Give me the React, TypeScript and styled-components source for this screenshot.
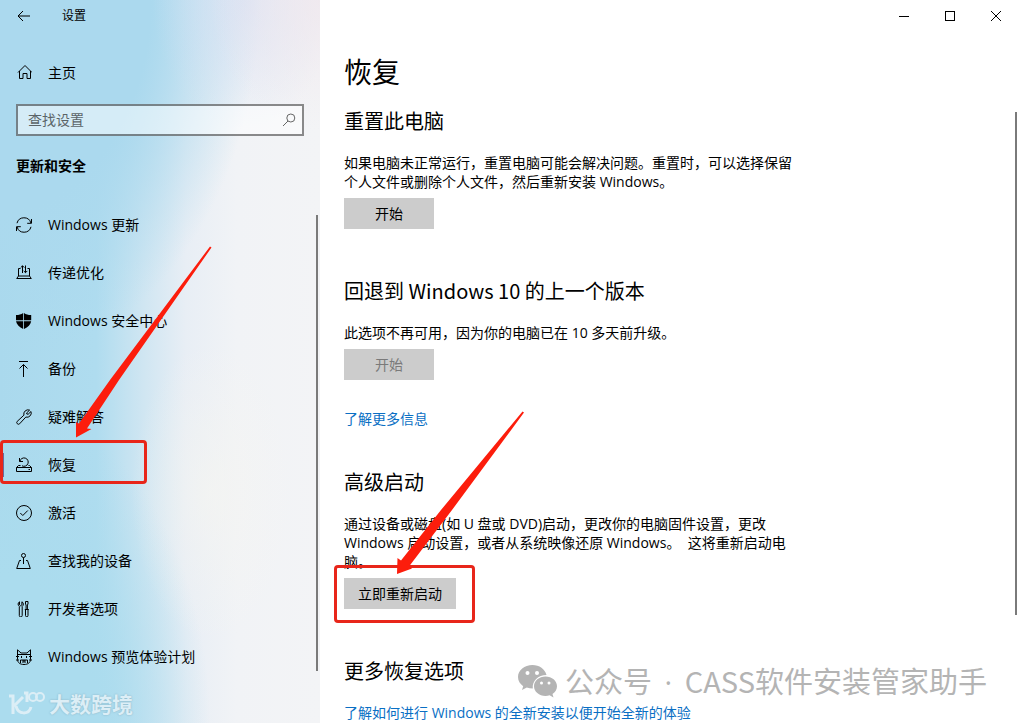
import React from "react";
import styled, { createGlobalStyle, css } from "styled-components";

const GlobalStyle = createGlobalStyle`
  *, *::before, *::after { box-sizing: border-box; }
  html, body { margin: 0; padding: 0; }
  body, button, input {
    font-family: "Open Sans", "Noto Sans CJK SC", sans-serif;
    font-size: 14px;
    color: #000;
  }
  h1, h2, p, ul { margin: 0; padding: 0; font-weight: 400; }
`;

const Shell = styled.div`
  display: flex;
  height: 100vh;
  overflow: hidden;
  background: #fff;
  position: relative;
`;

const Sidebar = styled.aside`
  position: relative;
  flex: 0 0 320px;
  display: flex;
  flex-direction: column;
  background:
    radial-gradient(ellipse 110px 130px at 100% 0, rgba(240, 230, 236, 0.7), rgba(240, 230, 236, 0) 100%),
    radial-gradient(ellipse 90px 130px at 76% 0, rgba(212, 222, 243, 0.7), rgba(212, 222, 243, 0) 100%),
    radial-gradient(ellipse 260px 360px at 0 0, #abd9ee 58%, rgba(171, 217, 238, 0) 100%),
    radial-gradient(ellipse 80px 150px at 66% 68%, rgba(246, 245, 240, 0.6), rgba(246, 245, 240, 0) 100%),
    radial-gradient(ellipse 210px 320px at 0 100%, #abdcee 45%, rgba(171, 220, 238, 0) 100%),
    linear-gradient(90deg, #aad9ed 0, #afdcef 30%, #d0e6f2 45%, #e8eef5 58%, #f1f3f6 74%, #f3f4f6 100%);
`;

const TopBar = styled.header`
  display: flex;
  align-items: center;
  height: 32px;
`;

const BackButton = styled.button`
  display: flex;
  align-items: center;
  justify-content: center;
  width: 48px;
  height: 32px;
  padding: 0;
  border: 0;
  background: none;
`;

const WindowTitle = styled.span`
  margin-left: 14px;
  font-size: 12px;
  line-height: 16px;
`;

const HomeLink = styled.a`
  display: flex;
  align-items: center;
  gap: 16px;
  height: 48px;
  margin-top: 16px;
  padding-left: 16px;
  color: #000;
  text-decoration: none;
`;

const SearchBox = styled.label`
  display: flex;
  align-items: center;
  height: 32px;
  margin: 8px 16px 0;
  padding: 0 6px 0 10px;
  border: 2px solid rgba(0, 0, 0, 0.45);
  background: rgba(255, 255, 255, 0.5);
`;

const SearchInput = styled.input`
  flex: 1;
  min-width: 0;
  padding: 0 0 2px;
  border: 0;
  outline: 0;
  background: none;
  &::placeholder { color: #5b6468; opacity: 1; }
`;

const Category = styled.h2`
  margin: 20px 16px 25px;
  font-size: 14px;
  font-weight: 700;
  line-height: 20px;
`;

const NavList = styled.ul`
  list-style: none;
`;

const NavItem = styled.li`
  position: relative;
`;

const NavLink = styled.a<{ $active?: boolean }>`
  display: flex;
  align-items: center;
  gap: 16px;
  height: 48px;
  padding-left: 16px;
  color: #000;
  line-height: 20px;
  text-decoration: none;
  ${(p) =>
    p.$active &&
    css`
      &::before {
        content: "";
        position: absolute;
        left: 0;
        top: 12px;
        width: 4px;
        height: 24px;
        background: #6a6a9c;
      }
    `}
`;

const Glyph = styled.svg`
  flex: none;
  fill: none;
  stroke: currentColor;
  stroke-width: 1;
`;

const ScrollThumb = styled.div<{ $top: number; $bottom: number }>`
  position: absolute;
  right: 2px;
  top: ${(p) => p.$top}px;
  bottom: ${(p) => p.$bottom}px;
  width: 2px;
  background: #7a7a7a;
`;

const Main = styled.main`
  position: relative;
  flex: 1;
  min-width: 0;
  display: flex;
  flex-direction: column;
`;

const Caption = styled.div`
  display: flex;
  justify-content: flex-end;
  flex: none;
  height: 32px;
`;

const CaptionButton = styled.button`
  display: flex;
  align-items: center;
  justify-content: center;
  width: 46px;
  padding: 0;
  border: 0;
  background: none;
`;

const Content = styled.div`
  flex: 1;
  min-height: 0;
  overflow-y: auto;
  scrollbar-width: none;
  padding: 20px 24px 0;
`;

const PageTitle = styled.h1`
  font-size: 28px;
  line-height: 40px;
  margin-bottom: 15px;
`;

const Section = styled.section`
  display: flex;
  flex-direction: column;
  align-items: flex-start;
  max-width: 450px;
  margin-bottom: 48px;

  &:last-child { margin-bottom: 0; }
`;

const SectionTitle = styled.h2`
  font-family: "Noto Sans CJK SC", sans-serif;
  font-size: 20px;
  line-height: 27px;
  margin-bottom: 19px;
`;

const Text = styled.p`
  line-height: 19px;
  margin-bottom: 7px;
`;

const ActionWrap = styled.div`
  position: relative;
`;

const ActionButton = styled.button`
  min-width: 90px;
  height: 31px;
  padding: 0 14px;
  border: 0;
  background: #ccc;
  line-height: 20px;
  &:disabled { color: #7a7a7a; }
`;

const TextLink = styled.a<{ $spaced?: boolean }>`
  margin-top: ${(p) => (p.$spaced ? 29 : 0)}px;
  margin-bottom: ${(p) => (p.$spaced ? -8 : 0)}px;
  line-height: 19px;
  color: #0a6fc4;
  text-decoration: none;
  white-space: nowrap;
`;

const Highlight = styled.div<{ $x: number; $y: number; $w: number; $h: number }>`
  position: absolute;
  left: ${(p) => p.$x}px;
  top: ${(p) => p.$y}px;
  width: ${(p) => p.$w}px;
  height: ${(p) => p.$h}px;
  border: 3px solid #e8261a;
  border-radius: 4px;
  pointer-events: none;
`;

const Arrow = styled.svg<{ $x: number; $y: number }>`
  position: absolute;
  left: ${(p) => p.$x}px;
  top: ${(p) => p.$y}px;
  z-index: 2;
  fill: #fc1d0c;
  pointer-events: none;
`;

const ChannelMark = styled.div`
  position: absolute;
  right: 32px;
  bottom: 19px;
  display: flex;
  align-items: center;
  gap: 8px;
  font-family: "Noto Sans CJK SC", sans-serif;
  font-size: 29px;
  line-height: 44px;
  color: #b4b4b4;
  white-space: nowrap;
`;

const Dot = styled.span`
  margin: 0 5px;
  font-family: "Open Sans", sans-serif;
`;

const SiteMark = styled.div`
  position: absolute;
  left: 8px;
  bottom: 6px;
  display: flex;
  align-items: center;
  gap: 3px;
  font-family: "Noto Sans CJK SC", sans-serif;
  font-size: 21px;
  font-weight: 700;
  line-height: 28px;
  color: #dceef6;
  text-shadow: 0 0 2px #86afc0;
`;

const NAV: { label: string; icon: React.ReactNode; active?: boolean }[] = [
  {
    label: "Windows 更新",
    icon: (
      <>
        <path d="M1 6.200A7.200 7.200 0 0 1 14.900 6M15 9.800A7.200 7.200 0 0 1 1.100 10" />
        <path d="M15.500 2v4.300h-4.300M.5 14V9.700h4.300" />
      </>
    ),
  },
  {
    label: "传递优化",
    icon: (
      <>
        <path d="M4.500 3.500h-2v7.500L.7 13.500h14.600L13.500 11V3.500h-2M2.500 11h11" />
        <path d="M6.500 8V.8M4.700 2.600L6.500.8l1.800 1.800M9.500.5v7.200M7.700 5.900l1.800 1.800 1.800-1.800" />
      </>
    ),
  },
  {
    label: "Windows 安全中心",
    icon: (
      <path
        fill="currentColor"
        stroke="none"
        d="M7.200 0v7.300H0V2C3 2 5 1.500 7.200 0zM8 0C10 1.500 12 2 15.200 2v5.300H8zM0 8.200h7.200V16C3.500 14 .6 11.500 0 8.200zM8 8.200h7.200C14.700 11.500 12 14 8 16z"
      />
    ),
  },
  { label: "备份", icon: <path d="M3 .5h9M7.500 16V3.500M3.500 7.500l4-4 4 4" /> },
  {
    label: "疑难解答",
    icon: (
      <path d="M13.600 1.100A4.300 4.300 0 0 0 7.900 6.200L1.200 12.400a1.700 1.700 0 0 0 2.400 2.400L9.800 8.100A4.300 4.300 0 0 0 15 2.500L12.200 5.200 10.800 5 10.700 3.900z" />
    ),
  },
  {
    label: "恢复",
    active: true,
    icon: (
      <>
        <path d="M4.500 8.500L2.500 8.500.5 10.500v4h15v-4l-2-2h-1M.5 10.500h15M12.500 12.500h1.500" />
        <path d="M3.500 1v3.500h3.500M3.900 4.300A4.200 4.200 0 1 1 6 8.800" />
      </>
    ),
  },
  {
    label: "激活",
    icon: (
      <>
        <circle cx="8" cy="8" r="7.500" />
        <path d="M4.300 8l2.500 2.500 5-5" />
      </>
    ),
  },
  {
    label: "查找我的设备",
    icon: (
      <>
        <circle cx="7.500" cy="2.500" r="2" />
        <path d="M7.500 4.500V11M5 7.500H3.500L.7 15.500h13.600L11.500 7.500H10" />
      </>
    ),
  },
  {
    label: "开发者选项",
    icon: (
      <>
        <path d="M3.500 .8v3l1.200 1 1.200-1v-3A2.600 2.600 0 0 1 6.200 5.300v9.200a1.400 1.400 0 0 1-2.900 0V5.300A2.600 2.600 0 0 1 3.500.8z" />
        <path d="M9.500 .5h2.500v2.500l-.6 1v4.500h-1.300V4l-.6-1zM8.800 8.500h4M9.500 8.500v6a1.200 1.200 0 0 0 2.500 0v-6" />
      </>
    ),
  },
  {
    label: "Windows 预览体验计划",
    icon: (
      <>
        <path d="M1.500 .8v9.700c0 3 2.500 5 6.500 5s6.500-2 6.500-5V.8L11 4H5zM0 7.500h3M13 7.500h3M0 11h3M13 11h3M2 5.500h12" />
        <path d="M5.500 7v2M10.500 7v2M4.500 14v-3h7v3M6 13h4M7 11v1h2v-1" />
      </>
    ),
  },
];

export default function App() {
  return (
    <Shell>
      <GlobalStyle />
      <Sidebar>
        <TopBar>
          <BackButton aria-label="返回">
            <Glyph width="14" height="12" viewBox="0 0 14 12">
              <path d="M1 6h12M6 1L1 6l5 5" />
            </Glyph>
          </BackButton>
          <WindowTitle>设置</WindowTitle>
        </TopBar>
        <HomeLink href="#home">
          <Glyph width="16" height="16" viewBox="0 0 16 16">
            <path d="M2 8.500l7-7 7 7M3.500 7v7.500h3.500V9.500h4v5h3.500V7" />
          </Glyph>
          主页
        </HomeLink>
        <SearchBox>
          <SearchInput type="text" placeholder="查找设置" aria-label="查找设置" />
          <Glyph width="14" height="14" viewBox="0 0 14 14" color="#666">
            <circle cx="8.800" cy="5" r="4" />
            <path d="M6 8l-5 5" />
          </Glyph>
        </SearchBox>
        <Category>更新和安全</Category>
        <nav>
          <NavList>
            {NAV.map((item) => (
              <NavItem key={item.label}>
                <NavLink href="#" $active={item.active}>
                  <Glyph width="16" height="16" viewBox="0 0 16 16">
                    {item.icon}
                  </Glyph>
                  {item.label}
                </NavLink>
                {item.active && (
                  <>
                    <Highlight $x={0} $y={-1} $w={147} $h={44} />
                    <Arrow $x={75} $y={-195} width="137" height="192" viewBox="0 0 137 192">
                      <path d="M135 0.500L136.500 1.500 44 134 12 182.500 16.500 183 1 191.500 1 176 4 177.500 35 134z" />
                    </Arrow>
                  </>
                )}
              </NavItem>
            ))}
          </NavList>
        </nav>
        <ScrollThumb $top={215} $bottom={52} />
        <SiteMark>
          <svg width="38" height="28" viewBox="0 0 38 28" fill="none" stroke="#dceef6" strokeWidth="3">
            <path d="M1 7h4v18M15 8l-9 9M8 17c2 9 13 9 15 1M16 4h3v9" />
            <circle cx="25" cy="8" r="4" strokeWidth="2" />
            <circle cx="32" cy="8" r="4" strokeWidth="2" />
          </svg>
          大数跨境
        </SiteMark>
      </Sidebar>
      <Main>
        <Caption>
          <CaptionButton aria-label="最小化">
            <Glyph width="10" height="10" viewBox="0 0 10 10" shapeRendering="crispEdges">
              <path d="M0 5.500h10" />
            </Glyph>
          </CaptionButton>
          <CaptionButton aria-label="最大化">
            <Glyph width="10" height="10" viewBox="0 0 10 10" shapeRendering="crispEdges">
              <path d="M.5 .5h9v9h-9z" />
            </Glyph>
          </CaptionButton>
          <CaptionButton aria-label="关闭">
            <Glyph width="10" height="10" viewBox="0 0 10 10">
              <path d="M0 0l10 10M10 0L0 10" />
            </Glyph>
          </CaptionButton>
        </Caption>
        <Content>
          <PageTitle>恢复</PageTitle>
          <Section>
            <SectionTitle>重置此电脑</SectionTitle>
            <Text>
              如果电脑未正常运行，重置电脑可能会解决问题。重置时，可以选择保留个人文件或删除个人文件，然后重新安装 Windows。
            </Text>
            <ActionButton>开始</ActionButton>
          </Section>
          <Section>
            <SectionTitle>回退到 Windows 10 的上一个版本</SectionTitle>
            <Text>此选项不再可用，因为你的电脑已在 10 多天前升级。</Text>
            <ActionButton disabled>开始</ActionButton>
            <TextLink href="#more" $spaced>
              了解更多信息
            </TextLink>
          </Section>
          <Section>
            <SectionTitle>高级启动</SectionTitle>
            <Text>
              通过设备或磁盘(如 U 盘或 DVD)启动，更改你的电脑固件设置，更改 Windows 启动设置，或者从系统映像还原 Windows。&nbsp; 这将重新启动电脑。
            </Text>
            <ActionWrap>
              <ActionButton>立即重新启动</ActionButton>
              <Highlight $x={-10} $y={-13} $w={141} $h={58} />
              <Arrow $x={52} $y={-167} width="129" height="164" viewBox="0 0 129 164">
                <path d="M126.500 0.500L128 1.500 56 99 13 155.500 16 157.500 1 163 1.500 147 5 149.500 45 99z" />
              </Arrow>
            </ActionWrap>
          </Section>
          <Section>
            <SectionTitle>更多恢复选项</SectionTitle>
            <TextLink href="#fresh">了解如何进行 Windows 的全新安装以便开始全新的体验</TextLink>
          </Section>
        </Content>
        <ScrollThumb $top={112} $bottom={108} />
        <ChannelMark>
          <svg width="39" height="33" viewBox="0 0 39 33" fill="#b4b4b4">
            <path d="M14.500 0C6.500 0 0 5.400 0 12c0 3.700 2 7 5.200 9.200L4 25l4.800-2.400c1.900.6 3.800.9 6 .9C14 16 20 10 28.500 10 27 4 21.300 0 14.500 0z" />
            <path d="M27.500 11.500c-6.400 0-11.500 4.300-11.500 9.700s5.100 9.700 11.500 9.700c1.500 0 2.900-.2 4.100-.6L35.500 32.500l-1-3.500c2.700-1.800 4.500-4.600 4.500-7.800 0-5.400-5.100-9.700-11.500-9.700z" />
            <g fill="#fff">
              <circle cx="9.500" cy="8" r="2" />
              <circle cx="19" cy="8" r="2" />
              <circle cx="23.500" cy="18" r="1.500" />
              <circle cx="31" cy="18" r="1.500" />
            </g>
          </svg>
          <span>
            公众号<Dot> · </Dot>CASS软件安装管家助手
          </span>
        </ChannelMark>
      </Main>
    </Shell>
  );
}
